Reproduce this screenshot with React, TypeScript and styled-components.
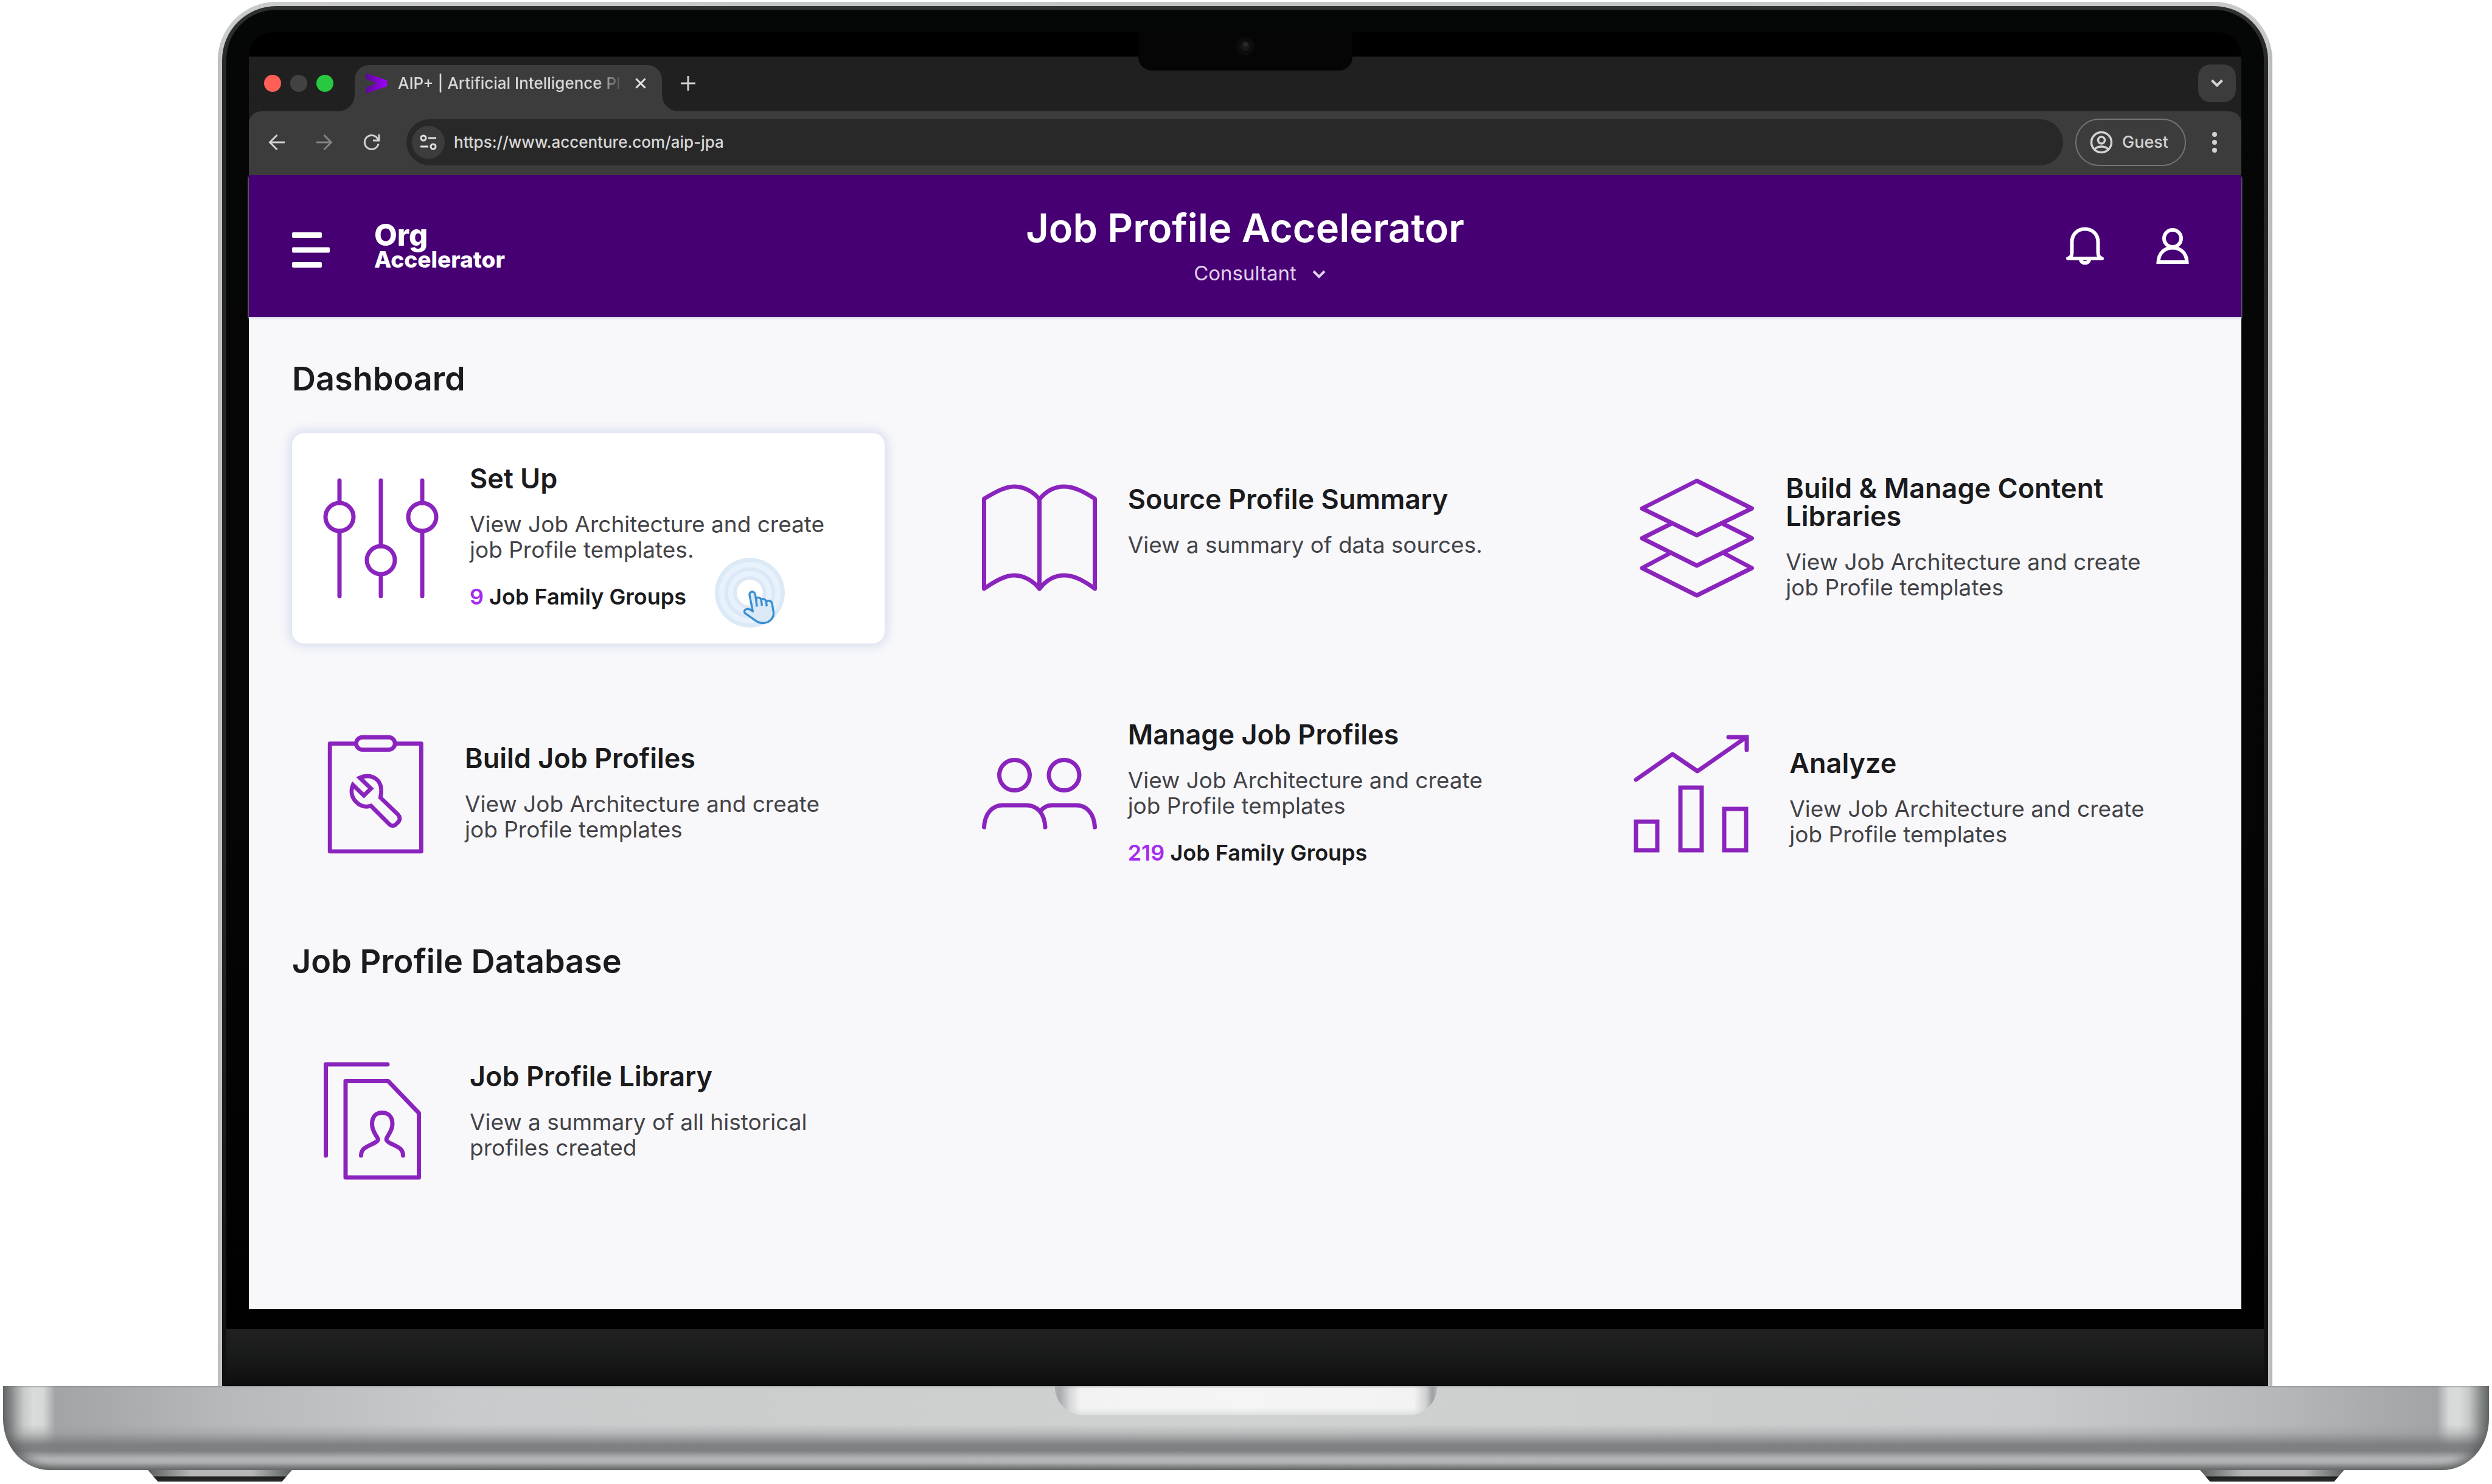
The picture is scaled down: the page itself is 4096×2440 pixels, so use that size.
import React from "react";
import styled, { createGlobalStyle, css } from "styled-components";

const ink = "#1b1b1d";
const body = "#434347";
const violet = "#8a24bd";
const header = "#460073";
const strip = "#202020";
const bar = "#3c3c3c";
const chromeText = "#d2d2d2";

const GlobalStyle = createGlobalStyle`
  *, *::before, *::after { box-sizing: border-box; }
  body {
    margin: 0;
    background: #fff;
    font-family: Inter, "Liberation Sans", sans-serif;
    color: ${ink};
  }
  h1, h2, h3, p { margin: 0; }
  button, input, select { font: inherit; color: inherit; background: none; border: 0; padding: 0; margin: 0; }
  svg { display: block; flex: none; }
`;

/* ---------- Laptop ---------- */

const Laptop = styled.div`
  min-height: 100vh;
  display: flex;
  flex-direction: column;
  padding: 3px 5px 4px;
`;

const Lid = styled.div`
  position: relative;
  flex: 1;
  display: flex;
  flex-direction: column;
  margin: 0 356px 0 353px;
  padding: 7px 7px 0;
  border-radius: 96px 96px 0 0;
  background: linear-gradient(90deg, #b9bbbb, #c9cbcb 8px, #c2c4c4 50%, #c9c9cc calc(100% - 8px), #b4b4b8);
`;

const LidEdge = styled.div`
  flex: 1;
  display: flex;
  flex-direction: column;
  padding: 6px 7px 0;
  border-radius: 89px 89px 0 0;
  background: linear-gradient(#2f3030, #262828 120px, #262828 60%, #101111);
`;

const Bezel = styled.div`
  flex: 1;
  display: flex;
  flex-direction: column;
  padding-top: 37px;
  border-radius: 82px 82px 0 0;
  background: linear-gradient(#050606, #050505 60%, #000);
`;

const Screen = styled.div`
  flex: 1;
  display: flex;
  flex-direction: column;
  margin: 0 37px 33px;
`;

const MenuBar = styled.div`
  height: 40px;
  border-radius: 42px 42px 0 0;
  background: #000;
`;

const Chin = styled.div`
  height: 94px;
  background: linear-gradient(#212121, #191b1a 45%, #131413 75%, #0d0d0d);
`;

const Notch = styled.div`
  position: absolute;
  top: 48px;
  left: 50%;
  width: 352px;
  height: 65px;
  margin-left: -176px;
  display: flex;
  justify-content: center;
  padding-top: 4px;
  border-radius: 0 0 22px 22px;
  background: #050505;
`;

const Base = styled.div`
  height: 138px;
  display: flex;
  justify-content: center;
  border-radius: 0 0 76px 76px / 0 0 84px 84px;
  background:
    linear-gradient(
      rgba(120, 122, 124, 0.45) 0,
      rgba(120, 122, 124, 0) 3px,
      rgba(120, 122, 124, 0) 46%,
      rgba(150, 151, 153, 0.4) 56%,
      rgba(124, 125, 127, 0.96) 70%,
      rgba(124, 125, 127, 0.96) 77%,
      rgba(184, 186, 188, 0.92) 87%,
      rgba(184, 186, 188, 0.92) 92%,
      #8d908f 99%
    ),
    linear-gradient(
      90deg,
      #727475 0,
      #8c8f8f 14px,
      #c8cbca 34px,
      #d9dcda 50px,
      #d6d8d8 66px,
      #a3a4a6 86px,
      #a9aaac 180px,
      #b7b8ba 360px,
      #c9cacb 760px,
      #d0d2d1 50%,
      #c9cacb calc(100% - 760px),
      #b7b8ba calc(100% - 360px),
      #a9aaac calc(100% - 180px),
      #a3a4a6 calc(100% - 86px),
      #d6d8d8 calc(100% - 66px),
      #d9dcda calc(100% - 50px),
      #c8cbca calc(100% - 34px),
      #8c8f8f calc(100% - 14px),
      #727475 100%
    );
  box-shadow: inset 16px -14px 18px -14px rgba(84, 86, 87, 0.8), inset -16px -14px 18px -14px rgba(84, 86, 87, 0.8);
`;

const Groove = styled.div`
  width: 628px;
  height: 48px;
  border-radius: 0 0 48px 48px / 0 0 46px 46px;
  background:
    linear-gradient(rgba(140, 142, 143, 0.5) 0, rgba(255, 255, 255, 0) 4px, rgba(255, 255, 255, 0) 75%, rgba(215, 217, 217, 0.8) 100%),
    linear-gradient(90deg, #aeb0b3 0, #a9abae 8px, #d5d6d8 24px, #f3f3f3 42px, #f5f5f5 50%, #f3f3f3 calc(100% - 38px), #cfd0d2 calc(100% - 18px), #9fa1a4 calc(100% - 8px), #b4b6b8 100%);
`;

const Feet = styled.div`
  display: flex;
  justify-content: space-between;
  padding: 0 238px;
`;

const Foot = styled.div`
  width: 237px;
  height: 19px;
  clip-path: polygon(0 0, 100% 0, 93% 100%, 7% 100%);
  background:
    linear-gradient(transparent 10px, #1c1c1c 11px, #2c2c2c),
    linear-gradient(90deg, #5c5f5e, #b4b6b8 30%, #b4b6b8 72%, #5c5f5e);
`;

/* ---------- Browser ---------- */

const TabStrip = styled.div`
  height: 90px;
  display: flex;
  align-items: center;
  padding: 0 9px 2px 25px;
  background: ${strip};
`;

const Lights = styled.div`
  display: flex;
  gap: 15px;
  margin-right: 35px;
`;

const Light = styled.span<{ $color: string }>`
  width: 28px;
  height: 28px;
  border-radius: 50%;
  background: ${(p) => p.$color};
`;

const flare = css`
  content: "";
  position: absolute;
  bottom: 0;
  width: 26px;
  height: 26px;
`;

const Tab = styled.div`
  position: relative;
  align-self: flex-end;
  width: 505px;
  height: 76px;
  display: flex;
  align-items: center;
  margin-bottom: -2px;
  padding: 0 26px 16px 17px;
  border-radius: 24px 24px 0 0;
  background: ${bar};
  &::before {
    ${flare}
    right: 100%;
    background: radial-gradient(circle at 0 0, transparent 25px, ${bar} 26px);
  }
  &::after {
    ${flare}
    left: 100%;
    background: radial-gradient(circle at 100% 0, transparent 25px, ${bar} 26px);
  }
`;

const TabTitle = styled.span`
  flex: 1;
  margin: 0 18px 0 18px;
  white-space: nowrap;
  font-size: 26px;
  line-height: 34px;
  font-weight: 500;
  color: #d8d8d8;
  mask-image: linear-gradient(90deg, #000 88%, transparent 100%);
`;

const IconButton = styled.button<{ $color?: string }>`
  flex: none;
  display: flex;
  align-items: center;
  justify-content: center;
  color: ${(p) => p.$color ?? chromeText};
`;

const NewTab = styled(IconButton)`
  margin-left: 31px;
`;

const TabSearch = styled(IconButton)`
  width: 62px;
  height: 62px;
  margin-left: auto;
  border-radius: 20px;
  background: ${bar};
`;

const ToolbarBack = styled.div`
  background: ${strip};
`;

const Toolbar = styled.div`
  height: 105px;
  display: flex;
  align-items: center;
  padding: 0 40px 3px 32px;
  border-radius: 20px 20px 0 0;
  background: ${bar};
`;

const NavButtons = styled.div`
  display: flex;
  gap: 50px;
  margin-right: 43px;
`;

const AddressBar = styled.div`
  flex: 1;
  height: 76px;
  display: flex;
  align-items: center;
  gap: 15px;
  padding: 0 30px 0 9px;
  border-radius: 38px;
  background: #282828;
`;

const SiteInfo = styled(IconButton)`
  width: 54px;
  height: 54px;
  border-radius: 50%;
  background: ${bar};
`;

const AddressInput = styled.input`
  flex: 1;
  min-width: 0;
  height: 40px;
  font-size: 26px;
  line-height: 40px;
  font-weight: 500;
  color: #d8d8d8;
  outline: 0;
`;

const Guest = styled.button`
  flex: none;
  height: 78px;
  display: flex;
  align-items: center;
  gap: 15px;
  margin: 0 43px 0 20px;
  padding: 0 27px 0 22px;
  border: 2px solid #757575;
  border-radius: 39px;
  font-size: 27px;
  line-height: 34px;
  font-weight: 500;
  color: ${chromeText};
`;

/* ---------- App header ---------- */

const AppHeader = styled.header`
  position: relative;
  height: 233px;
  display: grid;
  grid-template-columns: 1fr auto 1fr;
  align-items: center;
  padding: 0 86px 0 71px;
  background: ${header};
  box-shadow: 0 3px 3px #dcd8ee;
  color: #fff;
`;

const Brand = styled.div`
  display: flex;
  align-items: center;
  gap: 73px;
`;

const MenuButton = styled(IconButton)`
  padding-top: 12px;
`;

const Logo = styled.a`
  color: inherit;
  text-decoration: none;
  font-weight: 800;
`;

const LogoLine = styled.span<{ $size: number; $line: number }>`
  display: block;
  font-size: ${(p) => p.$size}px;
  line-height: ${(p) => p.$line}px;
`;

const TitleBlock = styled.div`
  display: flex;
  flex-direction: column;
  align-items: center;
  gap: 16px;
  margin-left: 15px;
`;

const Title = styled.h1`
  font-size: 65px;
  line-height: 72px;
  font-weight: 600;
`;

const RolePicker = styled.label`
  position: relative;
  display: block;
  color: #e2d3ee;
`;

const RoleSelect = styled.select`
  appearance: none;
  padding: 0 48px;
  font-size: 33px;
  line-height: 44px;
  height: 44px;
  outline: 0;
  text-align: center;
`;

const RoleArrow = styled.span`
  position: absolute;
  right: 0;
  top: 17px;
  pointer-events: none;
`;

const HeaderActions = styled.div`
  display: flex;
  align-items: center;
  justify-content: flex-end;
  gap: 86px;
`;

/* ---------- Dashboard ---------- */

const Content = styled.main`
  flex: 1;
  padding: 70px 67px 0 71px;
  background: #f8f8fb;
`;

const SectionTitle = styled.h2`
  font-size: 54px;
  line-height: 64px;
  font-weight: 600;
`;

const Cards = styled.div`
  display: grid;
  grid-template-columns: repeat(3, 1fr);
  gap: 75px 108px;
  margin: 57px 0 70px;
`;

const Card = styled.a<{ $active?: boolean; $gap: number }>`
  position: relative;
  min-height: 346px;
  display: flex;
  align-items: center;
  gap: ${(p) => p.$gap}px;
  padding: 0 20px 0 42px;
  border-radius: 20px;
  color: inherit;
  text-decoration: none;
  ${(p) =>
    p.$active &&
    css`
      background: #fff;
      box-shadow: 0 0 16px 6px #dbe1ef;
    `}
`;

const CardText = styled.div<{ $above: number; $below: number }>`
  padding: ${(p) => p.$above}px 0 ${(p) => p.$below}px;
`;

const CardTitle = styled.h3`
  font-size: 45px;
  line-height: 46px;
  font-weight: 600;
`;

const CardDesc = styled.p`
  margin-top: 31px;
  font-size: 37px;
  line-height: 42px;
  color: ${body};
`;

const CardCount = styled.p`
  margin-top: 35px;
  font-size: 36px;
  line-height: 42px;
  font-weight: 600;
`;

const Count = styled.span`
  color: #a62bf0;
`;

const ClickHint = styled.span`
  position: absolute;
  right: 149px;
  bottom: 8px;
`;

/* ---------- Icons ---------- */

const Drawing = ({ children }: { children: React.ReactNode }) => (
  <svg
    width="200"
    height="200"
    viewBox="0 0 200 200"
    fill="none"
    stroke={violet}
    strokeWidth="7"
    strokeLinecap="round"
    strokeLinejoin="round"
    aria-hidden="true"
  >
    {children}
  </svg>
);

const SlidersIcon = () => (
  <Drawing>
    <path d="M36 5V42M36 88V195M104 5V113M104 159V195M172 5V42M172 88V195" />
    <circle cx="36" cy="65" r="23" />
    <circle cx="104" cy="136" r="23" />
    <circle cx="172" cy="65" r="23" />
  </Drawing>
);

const BookIcon = () => (
  <Drawing>
    <path d="M13.5 35C32 24 48 15 63 15C80 15 95 24 104.5 36C114 24 128 15 145 15C162 15 178 24 195.5 35V183C178 170 162 161 145 161C128 161 114 171 104.5 183C95 171 80 161 63 161C48 161 32 170 13.5 183ZM104.5 36V183" />
  </Drawing>
);

const LayersIcon = () => (
  <Drawing>
    <path d="M104 5.5L194.5 51L104 95L14 51Z" />
    <path d="M61 76.5L14 100L104 145L194.5 100L147.5 76.5" />
    <path d="M61 124L14 149L104 194L194.5 149L147.5 124" />
  </Drawing>
);

const ClipboardIcon = () => (
  <Drawing>
    <g transform="translate(10 -3) scale(.243)" strokeWidth="28">
      <path d="M216 81H42V810H660V81H486" />
      <rect x="220" y="38" width="262" height="84" rx="42" />
      <path
        strokeLinejoin="miter"
        d="M244 312C308 284 356 312 376 344C392 372 394 406 384 446L502 560C516 574 518 596 506 610L490 626C476 640 458 640 444 626L320 502C282 514 246 502 220 476C190 446 180 404 198 360L272 432L320 385Z"
      />
    </g>
  </Drawing>
);

const PeopleIcon = () => (
  <Drawing>
    <circle cx="63.5" cy="68.5" r="25" />
    <circle cx="145" cy="68.5" r="25" />
    <path d="M13.5 154C14.5 133 26 118 44 118H83C101 118 113 132 114 154" />
    <path d="M106 128C111 121 117 118 125 118H165C183 118 194.5 133 195.5 154" />
  </Drawing>
);

const AnalyzeIcon = () => (
  <Drawing>
    <path d="M4 76L64 34L105 62L184 7" />
    <path strokeLinejoin="miter" d="M156 6H186V27" />
    <path strokeLinejoin="miter" d="M4 145H39V192H4ZM77 89H112V192H77ZM149 124H185V192H149Z" />
  </Drawing>
);

const LibraryIcon = () => (
  <Drawing>
    <path d="M13.5 157V7H115" />
    <path d="M46 34.5H116L166.5 87V193H46Z" />
    <path d="M71.5 157C71.5 145 80 143 92 137C102 132 100 130 96 124C91 116 89.5 111 89.5 105C89.5 93 96 86.5 106 86.5C116 86.5 123 93 123 105C123 111 121 116 116 124C112 130 111 132 120 137C132 143 140.5 145 140.5 157" />
  </Drawing>
);

const ClickIcon = () => (
  <svg width="146" height="146" viewBox="0 0 600 600" fill="none" aria-hidden="true">
    <circle cx="302" cy="290" r="236" fill="#dce9f6" />
    <circle cx="302" cy="290" r="208" fill="#e7f2fd" />
    <circle cx="302" cy="290" r="172" fill="#dce8f5" />
    <circle cx="302" cy="290" r="148" fill="#e7f2fd" />
    <circle cx="302" cy="290" r="112" fill="#dce8f5" />
    <circle cx="302" cy="290" r="88" fill="#fff" />
    <path
      d="M322 416L300 306C296 278 334 276 338 302L344 330C358 316 374 322 380 338C392 326 408 334 414 350C430 338 448 346 452 362L462 420C466 452 448 474 424 488C396 500 362 496 340 478L272 430C258 418 266 402 284 400C300 398 312 408 322 416Z"
      fill="#dbe9f7"
      stroke="#3a8fd2"
      strokeWidth="14"
      strokeLinejoin="round"
    />
    <path d="M342 320L350 384M378 336L384 378M412 346L416 382" stroke="#3a8fd2" strokeWidth="14" />
  </svg>
);

type CardData = {
  title: string;
  lines?: string[];
  desc: string[];
  count?: number;
  icon: React.ReactNode;
  active?: boolean;
  gap?: number;
  above?: number;
  below?: number;
};

const cards: CardData[] = [
  { title: "Set Up", desc: ["View Job Architecture and create", "job Profile templates."], count: 9, icon: <SlidersIcon />, active: true },
  { title: "Source Profile Summary", desc: ["View a summary of data sources."], icon: <BookIcon />, below: 56 },
  { title: "Build & Manage Content Libraries", lines: ["Build & Manage Content", "Libraries"], desc: ["View Job Architecture and create", "job Profile templates"], icon: <LayersIcon /> },
  { title: "Build Job Profiles", desc: ["View Job Architecture and create", "job Profile templates"], icon: <ClipboardIcon />, gap: 42 },
  { title: "Manage Job Profiles", desc: ["View Job Architecture and create", "job Profile templates"], count: 219, icon: <PeopleIcon /> },
  { title: "Analyze", desc: ["View Job Architecture and create", "job Profile templates"], icon: <AnalyzeIcon />, gap: 56, above: 16 },
];

const library: CardData[] = [
  { title: "Job Profile Library", desc: ["View a summary of all historical", "profiles created"], icon: <LibraryIcon />, below: 32 },
];

const Lines = ({ lines }: { lines: string[] }) => (
  <>
    {lines.map((line, i) => (
      <React.Fragment key={line}>
        {i > 0 && <br />}
        {line}
      </React.Fragment>
    ))}
  </>
);

const CardGrid = ({ items }: { items: CardData[] }) => (
  <Cards>
    {items.map((c) => (
      <Card key={c.title} href="#" $active={c.active} $gap={c.gap ?? 50}>
        {c.icon}
        <CardText $above={c.above ?? 0} $below={c.below ?? 4}>
          <CardTitle>
            <Lines lines={c.lines ?? [c.title]} />
          </CardTitle>
          <CardDesc>
            <Lines lines={c.desc} />
          </CardDesc>
          {c.count !== undefined && (
            <CardCount>
              <Count>{c.count}</Count> Job Family Groups
            </CardCount>
          )}
        </CardText>
        {c.active && (
          <ClickHint>
            <ClickIcon />
          </ClickHint>
        )}
      </Card>
    ))}
  </Cards>
);

export default function App() {
  return (
    <>
      <GlobalStyle />
      <Laptop>
        <Lid>
          <LidEdge>
            <Bezel>
              <Screen>
                <MenuBar />
                <TabStrip>
                  <Lights>
                    <Light $color="#ff5f57" />
                    <Light $color="#424242" />
                    <Light $color="#28c840" />
                  </Lights>
                  <Tab>
                    <svg width="36" height="36" viewBox="0 0 36 36" aria-hidden="true">
                      <defs>
                        <linearGradient id="fav" x1="0" x2="1">
                          <stop offset="0" stopColor="#5a0a94" />
                          <stop offset="1" stopColor="#a100ff" />
                        </linearGradient>
                      </defs>
                      <path d="M1 1L36 13V23L1 35V25L20 18L1 11Z" fill="url(#fav)" />
                    </svg>
                    <TabTitle>AIP+ | Artificial Intelligence Pl</TabTitle>
                    <IconButton aria-label="Close tab" $color="#e4e4e4">
                      <svg width="18" height="18" viewBox="0 0 18 18" stroke="currentColor" strokeWidth="3">
                        <path d="M1.5 1.5L16.5 16.5M16.5 1.5L1.5 16.5" />
                      </svg>
                    </IconButton>
                  </Tab>
                  <NewTab aria-label="New tab">
                    <svg width="24" height="24" viewBox="0 0 24 24" stroke="currentColor" strokeWidth="3">
                      <path d="M12 0V24M0 12H24" />
                    </svg>
                  </NewTab>
                  <TabSearch aria-label="Search tabs">
                    <svg width="20" height="14" viewBox="0 0 20 14" fill="none" stroke="currentColor" strokeWidth="4">
                      <path d="M1.5 2L10 10.5L18.5 2" />
                    </svg>
                  </TabSearch>
                </TabStrip>
                <ToolbarBack>
                  <Toolbar>
                    <NavButtons>
                      <IconButton aria-label="Back">
                        <svg width="28" height="28" viewBox="0 0 28 28" fill="none" stroke="currentColor" strokeWidth="3">
                          <path d="M27 14H3M14.5 2L2.5 14L14.5 26" />
                        </svg>
                      </IconButton>
                      <IconButton aria-label="Forward" $color="#848484">
                        <svg width="28" height="28" viewBox="0 0 28 28" fill="none" stroke="currentColor" strokeWidth="3">
                          <path d="M1 14H25M13.5 2L25.5 14L13.5 26" />
                        </svg>
                      </IconButton>
                      <IconButton aria-label="Reload">
                        <svg width="28" height="28" viewBox="0 0 28 28" fill="none" stroke="currentColor" strokeWidth="3">
                          <path d="M25 16.5A11.5 11.5 0 1 1 23 7L26 10.5M26 1V11H16" />
                        </svg>
                      </IconButton>
                    </NavButtons>
                    <AddressBar>
                      <SiteInfo aria-label="Site information" $color="#e0e0e0">
                        <svg width="28" height="26" viewBox="0 0 28 26" fill="none" stroke="currentColor" strokeWidth="3">
                          <circle cx="6" cy="6" r="4" />
                          <path d="M14 6H27M1 20H14" />
                          <circle cx="22" cy="20" r="4" />
                        </svg>
                      </SiteInfo>
                      <AddressInput aria-label="Address" type="text" readOnly value="https://www.accenture.com/aip-jpa" />
                    </AddressBar>
                    <Guest>
                      <svg width="38" height="38" viewBox="0 0 38 38" fill="none" stroke="currentColor" strokeWidth="3.5">
                        <circle cx="19" cy="19" r="16.5" />
                        <circle cx="19" cy="15.5" r="5.5" />
                        <path d="M8 30C13 24.5 25 24.5 30 30" />
                      </svg>
                      Guest
                    </Guest>
                    <IconButton aria-label="Browser menu">
                      <svg width="8" height="34" viewBox="0 0 8 34" fill="currentColor">
                        <circle cx="4" cy="4" r="4" />
                        <circle cx="4" cy="17" r="4" />
                        <circle cx="4" cy="30" r="4" />
                      </svg>
                    </IconButton>
                  </Toolbar>
                </ToolbarBack>
                <AppHeader>
                  <Brand>
                    <MenuButton aria-label="Menu" $color="#fff">
                      <svg width="62" height="58" viewBox="0 0 62 58" fill="currentColor">
                        <rect y="0" width="49" height="9" rx="2" />
                        <rect y="24.5" width="62" height="9" rx="2" />
                        <rect y="49" width="49" height="9" rx="2" />
                      </svg>
                    </MenuButton>
                    <Logo href="#">
                      <LogoLine $size={49} $line={44}>Org</LogoLine>
                      <LogoLine $size={37} $line={36}>Accelerator</LogoLine>
                    </Logo>
                  </Brand>
                  <TitleBlock>
                    <Title>Job Profile Accelerator</Title>
                    <RolePicker>
                      <RoleSelect aria-label="Role" defaultValue="Consultant">
                        <option>Consultant</option>
                      </RoleSelect>
                      <RoleArrow>
                        <svg width="22" height="14" viewBox="0 0 22 14" fill="none" stroke="currentColor" strokeWidth="4">
                          <path d="M2 2L11 11L20 2" />
                        </svg>
                      </RoleArrow>
                    </RolePicker>
                  </TitleBlock>
                  <HeaderActions>
                    <IconButton aria-label="Notifications" $color="#fff">
                      <svg width="62" height="64" viewBox="0 0 62 64" fill="none" stroke="currentColor" strokeWidth="6" strokeLinecap="round" strokeLinejoin="round">
                        <path d="M3 52H59C53 50 52.500 46 52.500 42V25C52.500 12 43 3.500 31 3.500C19 3.500 9.500 12 9.500 25V42C9.500 46 9 50 3 52Z" />
                        <path d="M24 54C25 61 37 61 38 54" />
                      </svg>
                    </IconButton>
                    <IconButton aria-label="Account" $color="#fff">
                      <svg width="54" height="60" viewBox="0 0 54 60" fill="none" stroke="currentColor" strokeWidth="6">
                        <circle cx="27" cy="17" r="14" />
                        <path d="M3.500 56H50.500C50 41 40 32.500 27 32.500C14 32.500 4 41 3.500 56Z" />
                      </svg>
                    </IconButton>
                  </HeaderActions>
                </AppHeader>
                <Content>
                  <SectionTitle>Dashboard</SectionTitle>
                  <CardGrid items={cards} />
                  <SectionTitle>Job Profile Database</SectionTitle>
                  <CardGrid items={library} />
                </Content>
              </Screen>
              <Chin />
            </Bezel>
          </LidEdge>
          <Notch>
            <svg width="42" height="42" viewBox="0 0 42 42" aria-hidden="true">
              <circle cx="21" cy="21" r="15" fill="#0c0c0d" />
              <circle cx="21" cy="21" r="8" fill="#161718" />
              <circle cx="21" cy="18" r="4" fill="#27292a" />
            </svg>
          </Notch>
        </Lid>
        <Base>
          <Groove />
        </Base>
        <Feet>
          <Foot />
          <Foot />
        </Feet>
      </Laptop>
    </>
  );
}
